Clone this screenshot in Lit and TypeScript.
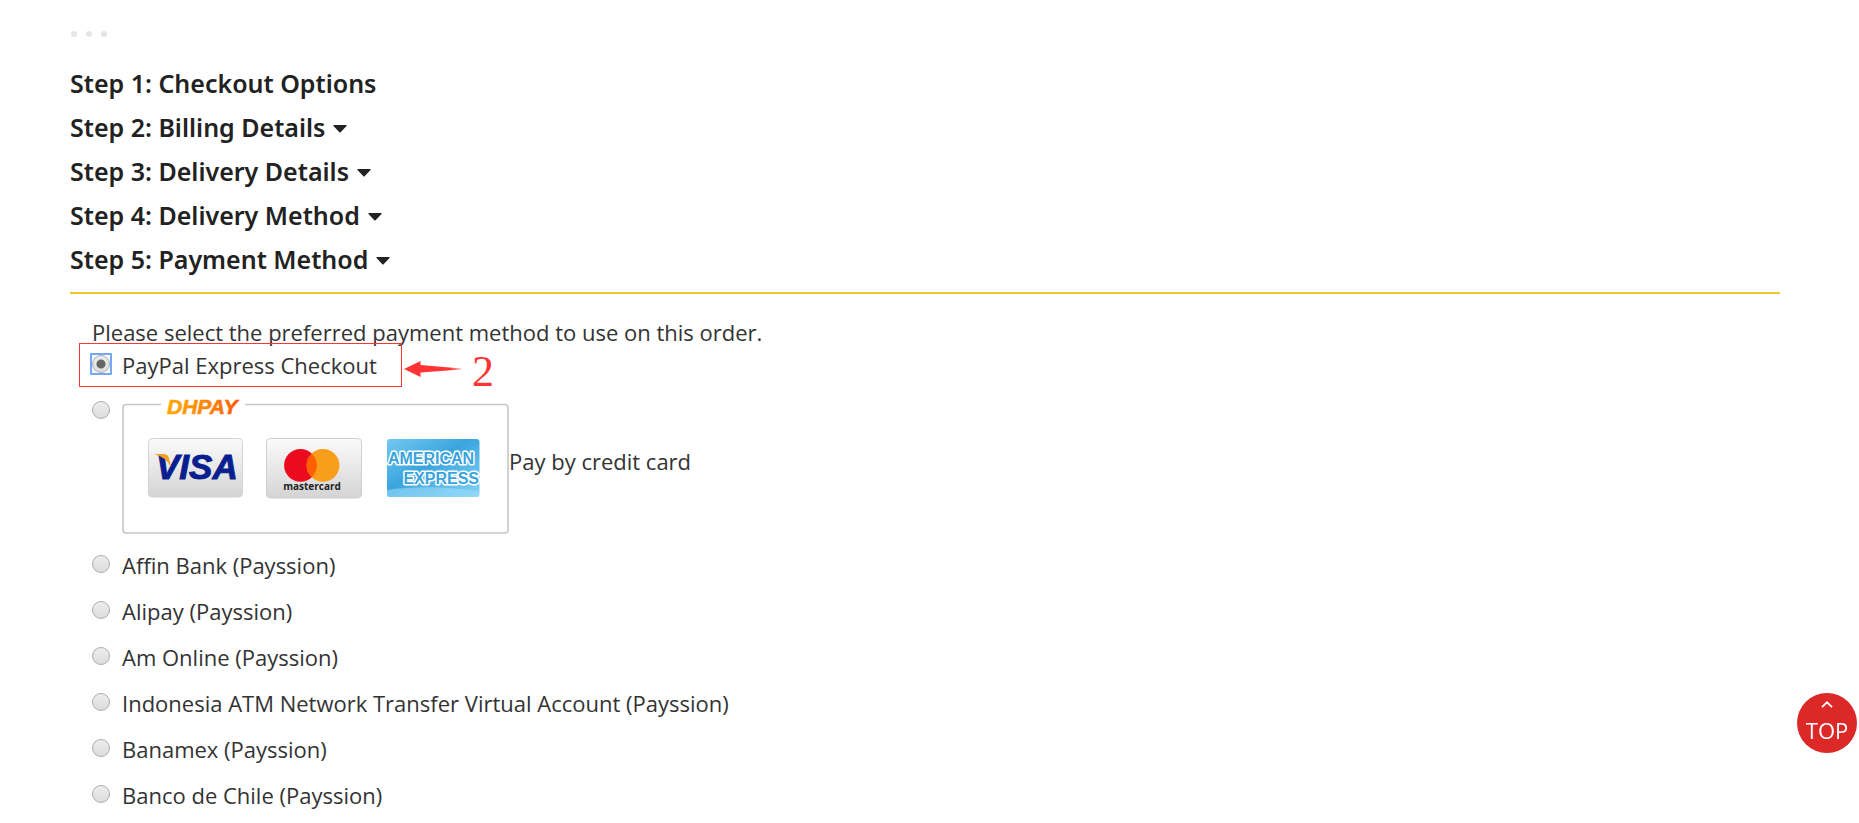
import { LitElement, html, css } from "lit";
import { customElement, property, state } from "lit/decorators.js";

interface Step {
  title: string;
  open: boolean;
}

const STEPS: Step[] = [
  { title: "Step 1: Checkout Options", open: false },
  { title: "Step 2: Billing Details", open: true },
  { title: "Step 3: Delivery Details", open: true },
  { title: "Step 4: Delivery Method", open: true },
  { title: "Step 5: Payment Method", open: true },
];

const METHODS = [
  { id: "paypal", label: "PayPal Express Checkout" },
  { id: "dhpay", label: "Pay by credit card" },
  { id: "affin", label: "Affin Bank (Payssion)" },
  { id: "alipay", label: "Alipay (Payssion)" },
  { id: "amonline", label: "Am Online (Payssion)" },
  { id: "atm", label: "Indonesia ATM Network Transfer Virtual Account (Payssion)" },
  { id: "banamex", label: "Banamex (Payssion)" },
  { id: "chile", label: "Banco de Chile (Payssion)" },
];

/** Framed strip with the accepted card brands. */
@customElement("card-brands")
export class CardBrands extends LitElement {
  static styles = css`
    :host {
      display: block;
      width: 387px;
      flex: none;
    }
    .art {
      display: block;
      width: 100%;
      height: auto;
      overflow: visible;
    }
    .dhpay {
      font: italic 700 21px "Liberation Sans", sans-serif;
    }
    .visa {
      font: italic 700 35px "Liberation Sans", sans-serif;
      fill: #0a1f8f;
      stroke: #0a1f8f;
      stroke-width: 1px;
    }
    .master {
      font: 700 10px "Open Sans", sans-serif;
      fill: #222;
    }
    .amex {
      font: 700 16px "Liberation Sans", sans-serif;
      fill: #3ba3dc;
      stroke: #fff;
      stroke-width: 3px;
      stroke-linejoin: round;
      paint-order: stroke;
    }
  `;

  render() {
    return html`<svg class="art" viewBox="0 0 387 134" aria-hidden="true">
      <defs>
        <linearGradient id="orange" x1="0" x2="1">
          <stop offset="0" stop-color="#ffa800" />
          <stop offset="0.5" stop-color="#fb8a0a" />
          <stop offset="1" stop-color="#ff5a00" />
        </linearGradient>
        <linearGradient id="silver" x1="0" x2="0" y1="0" y2="1">
          <stop offset="0" stop-color="#fbfbfb" />
          <stop offset="1" stop-color="#d4d4d4" />
        </linearGradient>
        <linearGradient id="sky" x1="0" x2="1" y1="0" y2="1">
          <stop offset="0" stop-color="#74c8f0" />
          <stop offset="0.45" stop-color="#3aa5de" />
          <stop offset="1" stop-color="#86d3f6" />
        </linearGradient>
      </defs>
      <path
        d="M39 4.500H4Q1 4.500 1 7.500V130Q1 133 4 133H383Q386 133 386 130V7.500Q386 4.500 383 4.500H123"
        fill="none" stroke="#c6c6c6" stroke-width="1.6" />
      <text class="dhpay" x="45" y="14" fill="url(#orange)" stroke="url(#orange)" stroke-width="0.6">DHPAY</text>

      <rect x="26.500" y="38.500" width="94" height="58.500" rx="4" fill="url(#silver)" stroke="#d2d2d2" />
      <text class="visa" x="34" y="79">VISA</text>
      <path d="M32 54H42.500Q46 54.500 47 58L49 67Q44 57 32 54Z" fill="#f5a01c" />

      <rect x="144.500" y="38.500" width="95" height="59.500" rx="4" fill="url(#silver)" stroke="#cfcfcf" />
      <circle cx="178.500" cy="65.300" r="16.400" fill="#eb0a1e" />
      <circle cx="201" cy="65.300" r="16.400" fill="#f79e1b" />
      <path d="M189.750 53.400A16.400 16.400 0 0 1 189.750 77.200A16.400 16.400 0 0 1 189.750 53.400Z" fill="#ff5f00" />
      <text class="master" x="190" y="90" text-anchor="middle">mastercard</text>

      <rect x="265" y="39" width="92.500" height="58" rx="3" fill="url(#sky)" />
      <path d="M265 97V90Q305 84 357 91V97Z" fill="#9adbf8" opacity="0.6" />
      <text class="amex" x="309" y="64" text-anchor="middle">AMERICAN</text>
      <text class="amex" x="357" y="84" text-anchor="end">EXPRESS</text>
    </svg>`;
  }
}

/** Callout drawn around an option: frame, arrow and number. */
@customElement("step-callout")
export class StepCallout extends LitElement {
  @property() number = "";

  static styles = css`
    :host {
      display: block;
      position: absolute;
      left: -13px;
      top: -7px;
      width: 323px;
      height: 44px;
      box-sizing: border-box;
      border: 1px solid #f33;
      color: #f33;
      pointer-events: none;
    }
    .pointer {
      position: absolute;
      left: 100%;
      top: 0;
      display: flex;
      align-items: center;
      gap: 11px;
      height: 50px;
      padding-left: 3px;
    }
    .num {
      padding-top: 6px;
      font: 44px/44px "Liberation Serif", serif;
    }
  `;

  render() {
    return html`<div class="pointer">
      <svg width="57" height="18" viewBox="0 0 57 18">
        <defs>
          <linearGradient id="fade" x1="0" x2="1">
            <stop offset="0.8" stop-color="#f33" />
            <stop offset="1" stop-color="#f33" stop-opacity="0.4" />
          </linearGradient>
        </defs>
        <path d="M0 9L16.500 1V5L57 8.500V9.500L16.500 12.500V17Z" fill="url(#fade)" />
      </svg>
      <span class="num">${this.number}</span>
    </div>`;
  }
}

@customElement("app-root")
export class AppRoot extends LitElement {
  @state() private selected = "paypal";

  static styles = css`
    :host {
      display: block;
      height: 100vh;
      overflow: hidden;
      background: #fff;
      color: #333;
      font: 22px/30px "Open Sans", "Noto Sans", sans-serif;
    }
    .page {
      padding: 31px 79px 0 70px;
    }
    .dots {
      display: flex;
      gap: 9px;
      padding-left: 1px;
    }
    .dot {
      width: 6px;
      height: 6px;
      border-radius: 50%;
      background: #e5e5e5;
    }
    .steps {
      display: flex;
      flex-direction: column;
      align-items: flex-start;
      gap: 16px;
      margin-top: 32px;
      padding-bottom: 19px;
      border-bottom: 2px solid #efc53a;
    }
    .step {
      margin: 0;
      color: #222;
      font: 600 25px/28px "Noto Sans", "Open Sans", sans-serif;
    }
    .toggle {
      display: flex;
      align-items: center;
      gap: 8px;
      padding: 0;
      border: 0;
      background: none;
      color: inherit;
      font: inherit;
      cursor: pointer;
    }
    .caret {
      margin-top: 4px;
    }
    .panel {
      padding: 23px 22px 0;
    }
    .intro {
      margin: 0 0 3px;
    }
    .methods {
      display: flex;
      flex-direction: column;
      gap: 16px;
      margin: 0;
      padding: 0;
      border: 0;
    }
    .method {
      position: relative;
      display: flex;
      align-items: flex-start;
    }
    .radio {
      appearance: none;
      position: relative;
      flex: none;
      width: 18px;
      height: 18px;
      margin: 5px 12px 0 0;
      border: 1px solid #adadad;
      border-radius: 50%;
      background: linear-gradient(#ededed, #dcdcdc);
    }
    .radio:checked {
      background: radial-gradient(circle, #666 0 4px, transparent 5px),
        linear-gradient(#ededed, #dcdcdc);
    }
    .radio:checked::before {
      content: "";
      position: absolute;
      inset: -3px;
      border: 2px solid #74a7fa;
      border-radius: 1px;
    }
    .label {
      display: flex;
      align-items: center;
    }
    .with-brands {
      padding-bottom: 8px;
    }
    .brands {
      margin-top: 4px;
    }
    .top {
      position: fixed;
      right: 2px;
      bottom: 70px;
      display: flex;
      flex-direction: column;
      align-items: center;
      width: 60px;
      height: 60px;
      padding: 8px 0 0;
      border: 0;
      border-radius: 50%;
      background: #dd2828;
      color: #fff;
      font: 22px/30px "Open Sans", sans-serif;
      cursor: pointer;
    }
    .up {
      flex: none;
      margin-bottom: 7px;
    }
  `;

  private renderStep(step: Step) {
    return html`<h4 class="step">
      ${step.open
        ? html`<button class="toggle" type="button">
            ${step.title}
            <svg class="caret" width="14" height="8" viewBox="0 0 14 8" aria-hidden="true">
              <path d="M0.800 0H13.200Q14 0.400 13.500 1L7.600 7.300Q7 7.800 6.400 7.300L0.500 1Q0 0.400 0.800 0Z" fill="currentColor" />
            </svg>
          </button>`
        : step.title}
    </h4>`;
  }

  render() {
    return html`
      <main class="page">
        <div class="dots"><i class="dot"></i><i class="dot"></i><i class="dot"></i></div>
        <section class="steps">${STEPS.map((s) => this.renderStep(s))}</section>
        <section class="panel">
          <p class="intro">Please select the preferred payment method to use on this order.</p>
          <fieldset class="methods" aria-label="Payment method">
            ${METHODS.map(
              (m) => html`<div class="method">
                <input
                  class="radio"
                  type="radio"
                  name="payment"
                  id=${m.id}
                  .checked=${this.selected === m.id}
                  @change=${() => (this.selected = m.id)}
                />
                <label class="label" for=${m.id}>
                  ${m.id === "dhpay"
                    ? html`<card-brands class="brands"></card-brands><span class="with-brands">${m.label}</span>`
                    : m.label}
                </label>
                ${m.id === "paypal" ? html`<step-callout number="2"></step-callout>` : null}
              </div>`
            )}
          </fieldset>
        </section>
      </main>
      <button class="top" type="button">
        <svg class="up" width="12" height="7" viewBox="0 0 12 7" aria-hidden="true">
          <path d="M1 6.200L6 1.300L11 6.200" fill="none" stroke="#fff" stroke-width="1.800" />
        </svg>
        TOP
      </button>
    `;
  }
}
